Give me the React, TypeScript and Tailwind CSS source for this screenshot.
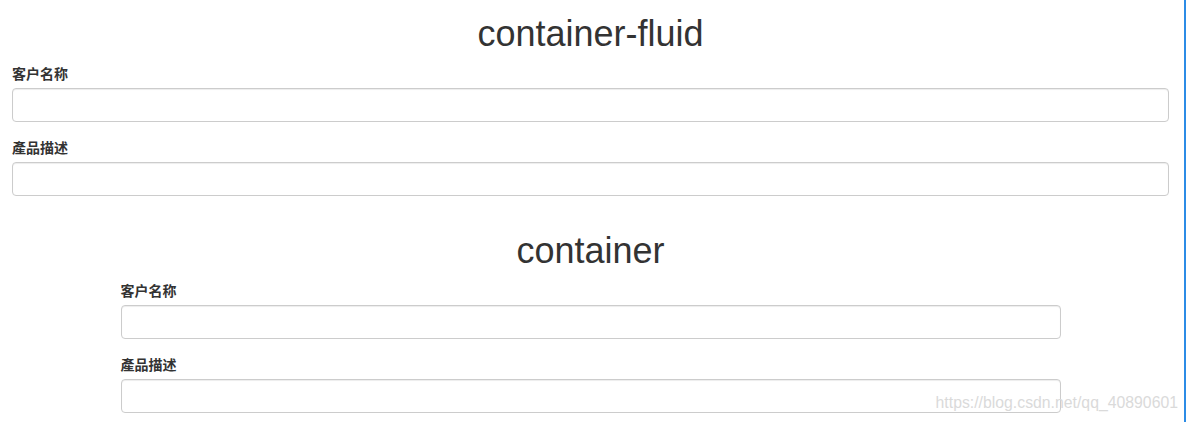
const labelFont = { fontFamily: '"Noto Sans CJK SC", "Liberation Sans", sans-serif' };

function Field({ label }: { label: string }) {
  return (
    <div className="mb-[15px]">
      <label
        className="block mb-[5px] text-[14px] leading-[20px] font-bold text-[#333]"
        style={labelFont}
      >
        {label}
      </label>
      <input
        type="text"
        className="block w-full h-[34px] px-3 border border-[#ccc] rounded-[4px] bg-white shadow-[inset_0_1px_1px_rgba(0,0,0,0.075)] outline-none"
      />
    </div>
  );
}

function Block({ title }: { title: string }) {
  return (
    <div>
      <h1 className="mb-[9px] text-center text-[36px] leading-[40px] font-normal text-[#333] font-['Liberation_Sans',Arial,sans-serif]">
        {title}
      </h1>
      <Field label="客户名称" />
      <Field label="產品描述" />
    </div>
  );
}

export default function App() {
  return (
    <div className="relative flex w-[1186px] h-[422px] overflow-hidden bg-white">
      <div className="w-[1181px] shrink-0">
        <div className="px-[12px] pt-[14px]">
          <Block title="container-fluid" />
        </div>
        <div className="w-[940px] mx-auto pt-[20px]">
          <Block title="container" />
        </div>
      </div>
      <div className="w-[3px] shrink-0" />
      <div className="w-[2px] shrink-0 bg-[#2c8ce6]" />
      <div className="absolute right-[8px] top-[393px] text-[15.8px] leading-[20px] text-[#dadada] font-['Liberation_Sans',Arial,sans-serif]">
        https://blog.csdn.net/qq_40890601
      </div>
    </div>
  );
}
